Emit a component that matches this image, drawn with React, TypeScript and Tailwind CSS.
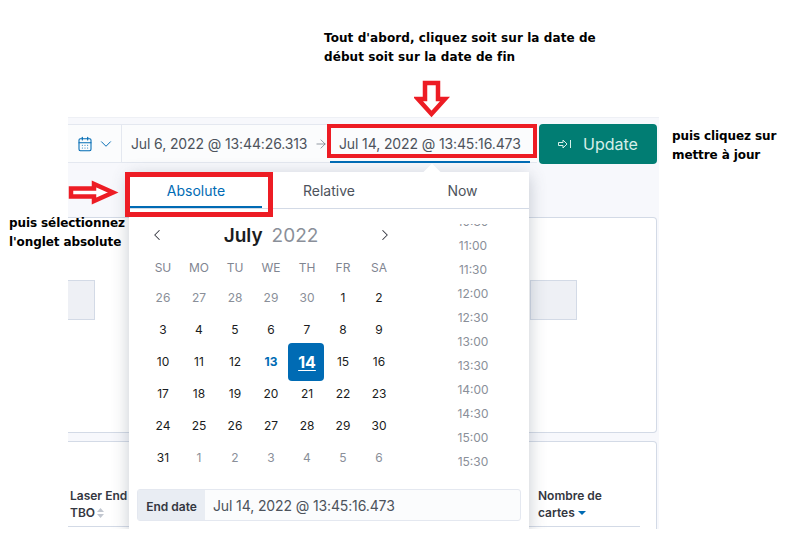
import React from "react";
import { CalendarDays, ChevronDown, ChevronLeft, ChevronRight, ArrowRight } from "lucide-react";

const weekDays = ["SU", "MO", "TU", "WE", "TH", "FR", "SA"];

const days = [
  { n: 26, muted: true }, { n: 27, muted: true }, { n: 28, muted: true }, { n: 29, muted: true }, { n: 30, muted: true }, { n: 1 }, { n: 2 },
  { n: 3 }, { n: 4 }, { n: 5 }, { n: 6 }, { n: 7 }, { n: 8 }, { n: 9 },
  { n: 10 }, { n: 11 }, { n: 12 }, { n: 13, today: true }, { n: 14, selected: true }, { n: 15 }, { n: 16 },
  { n: 17 }, { n: 18 }, { n: 19 }, { n: 20 }, { n: 21 }, { n: 22 }, { n: 23 },
  { n: 24 }, { n: 25 }, { n: 26 }, { n: 27 }, { n: 28 }, { n: 29 }, { n: 30 },
  { n: 31 }, { n: 1, muted: true }, { n: 2, muted: true }, { n: 3, muted: true }, { n: 4, muted: true }, { n: 5, muted: true }, { n: 6, muted: true },
];

const times = ["10:30", "11:00", "11:30", "12:00", "12:30", "13:00", "13:30", "14:00", "14:30", "15:00", "15:30"];

function DayCell({ d }: { d: { n: number; muted?: boolean; today?: boolean; selected?: boolean } }) {
  if (d.selected) {
    return (
      <div className="flex h-8 items-center justify-center">
        <span className="flex h-[38px] w-[38px] -translate-x-px items-center justify-center rounded-[4px] bg-[#006bb4] pl-[2px] text-[16px] font-bold text-white underline underline-offset-2">
          {d.n}
        </span>
      </div>
    );
  }
  let color = "text-[#1a1c21]";
  if (d.muted) color = "text-[#8a8f99]";
  if (d.today) color = "font-bold text-[#006bb4]";
  return <div className={`flex h-8 items-center justify-center text-[12px] ${color}`}>{d.n}</div>;
}

export default function App() {
  return (
    <div className="relative h-[537px] w-[796px] overflow-hidden bg-white font-['Inter',sans-serif]">
      <div className="ml-[68px] pt-[117px]">
        <div className="relative h-[412px] w-[591px] overflow-hidden border-t border-[#eef0f5] bg-[#f7f8fc]">
          {/* top bar */}
          <div className="flex items-start pt-[6px]">
            <div className="flex h-[39px] w-[469px] items-center border-y border-[#e4e8f0] bg-[#fbfcfd]">
              <div className="flex h-full w-[54px] items-center gap-[4px] border-r border-[#e4e8f0] pl-[9px] text-[#006bb4]">
                <CalendarDays size={16} strokeWidth={1.6} />
                <ChevronDown size={18} strokeWidth={1.3} />
              </div>
              <span className="ml-[9px] whitespace-nowrap text-[14px] tracking-[-0.12px] text-[#4d535c]">Jul 6, 2022 @ 13:44:26.313</span>
              <ArrowRight size={14} strokeWidth={1.2} className="ml-[7px] text-[#69707d]" />
            </div>
            <div className="ml-[2px] flex h-[40px] w-[118px] items-center justify-center gap-[11px] rounded-[4px] bg-[#017d73] text-[16px] text-[#d6efe9]">
              <svg width="14" height="10" viewBox="0 0 14 10" fill="none" stroke="currentColor" strokeWidth="1">
                <path d="M0.5 3.5H5V1L9 5L5 9V6.5H0.5Z" />
                <path d="M12.5 1V9" />
              </svg>
              <span>Update</span>
            </div>
          </div>

          {/* panels */}
          <div className="mt-[53px] flex w-[589px] flex-col gap-2">
            <div className="h-[216px] rounded-[4px] rounded-l-none border border-l-0 border-[#d3dae6] bg-white pt-[62px]">
              <div className="flex justify-between pr-[79px]">
                <div className="h-10 w-[27px] border border-l-0 border-[#d3dae6] bg-[#eef0f5]" />
                <div className="h-10 w-[47px] border border-[#d3dae6] bg-[#eef0f5]" />
              </div>
            </div>
            <div className="h-[120px] rounded-[4px] rounded-l-none border border-l-0 border-[#d3dae6] bg-white pt-[45px] text-[12px] font-semibold leading-[17px] text-[#343741]">
              <div className="flex w-[572px] border-b border-[#d3dae6] pb-[5px]">
                <div className="ml-[2px] w-[60px]">
                  <p>Laser End</p>
                  <p className="flex items-center gap-[2px]">
                    TBO
                    <svg width="7" height="10" viewBox="0 0 7 10" fill="#c2c7d0"><path d="M3.5 0L7 4H0Z" /><path d="M3.5 10L0 6H7Z" /></svg>
                  </p>
                </div>
                <div className="ml-[408px] w-[90px]">
                  <p>Nombre de</p>
                  <p className="flex items-center gap-[3px]">
                    cartes
                    <svg width="8" height="4" viewBox="0 0 8 4" fill="#006bb4"><path d="M0 0H8L4 4Z" /></svg>
                  </p>
                </div>
              </div>
            </div>
          </div>

          {/* popover */}
          <div className="absolute left-[61px] top-[54px] w-[400px] bg-white shadow-[0_4px_16px_rgba(65,78,101,0.3)]">
            <div className="absolute left-[297px] top-[-6px] h-3 w-3 rotate-45 bg-white" />
            <div className="relative flex h-[37px] items-stretch border-b border-[#d3dae6] text-[14px] text-[#4d535c]">
              <div className="ml-px flex w-[132px] items-center justify-center border-b-2 border-[#006bb4] pt-[3px] text-[#006bb4]">Absolute</div>
              <div className="flex w-[134px] items-center justify-center pt-px">Relative</div>
              <div className="flex w-[133px] items-center justify-center pt-px">Now</div>
            </div>
            <div className="flex">
              <div className="w-[291px] pl-4 pt-[11px]">
                <div className="flex h-8 w-[252px] items-center justify-between px-[3px] text-[#343741]">
                  <ChevronLeft size={18} strokeWidth={1.4} className="-translate-y-px" />
                  <div className="flex items-baseline gap-[9px]">
                    <span className="text-[19px] font-semibold text-[#1a1c21]">July</span>
                    <span className="text-[19px] text-[#8a8f99]">2022</span>
                  </div>
                  <ChevronRight size={18} strokeWidth={1.4} className="-translate-y-px" />
                </div>
                <div className="mt-1 grid w-[252px] grid-cols-7 pb-[2px] text-center text-[12px] leading-6 text-[#7f8591]">
                  {weekDays.map((w) => (
                    <span key={w}>{w}</span>
                  ))}
                </div>
                <div className="grid w-[252px] grid-cols-7">
                  {days.map((d, i) => (
                    <DayCell key={i} d={d} />
                  ))}
                </div>
              </div>
              <div className="mt-[15px] h-[251px] w-[106px] overflow-hidden text-center text-[12px] leading-6 text-[#8a8f99]">
                <div className="-mt-[14px]">
                  {times.map((t) => (
                    <div key={t}>{t}</div>
                  ))}
                </div>
              </div>
            </div>
            <div className="mx-2 mb-3 mt-[14px] flex h-8 items-stretch rounded-[3px] border border-[#e4e8f0] bg-[#fbfcfd] text-[14px]">
              <div className="flex w-[67px] items-center justify-center bg-[#e9edf3] pt-[3px] text-[12px] font-semibold text-[#343741]">End date</div>
              <div className="flex items-center pl-2 tracking-[-0.12px] text-[#4d535c]">Jul 14, 2022 @ 13:45:16.473</div>
            </div>
          </div>

          {/* end date field and its active underline */}
          <div className="absolute left-[262px] top-[43px] h-[2px] w-[200px] bg-[#006bb4]" />
          <span className="absolute left-[271px] top-[15px] whitespace-nowrap text-[14px] tracking-[-0.12px] text-[#4d535c]">Jul 14, 2022 @ 13:45:16.473</span>
        </div>
      </div>

      {/* annotations */}
      <div className="absolute left-[324px] top-[29px] font-['DejaVu_Sans',sans-serif] text-[12px] font-bold leading-[19px] tracking-[0.08px] text-black">
        <p className="whitespace-nowrap">Tout d'abord, cliquez soit sur la date de</p>
        <p className="whitespace-nowrap">début soit sur la date de fin</p>
      </div>
      <div className="absolute left-[672px] top-[127px] font-['DejaVu_Sans',sans-serif] text-[12px] font-bold leading-[19px] tracking-[-0.1px] text-black">
        <p>puis cliquez sur</p>
        <p>mettre à jour</p>
      </div>
      <div className="absolute left-[9px] top-[214px] font-['DejaVu_Sans',sans-serif] text-[12px] font-bold leading-[19px] tracking-[-0.1px] text-black">
        <p>puis sélectionnez</p>
        <p>l'onglet absolute</p>
      </div>
      <div className="absolute left-[327px] top-[124px] h-[34px] w-[210px] border-[4px] border-[#ed1c24]" />
      <div className="absolute left-[125px] top-[172px] h-[45px] w-[148px] border-[5px] border-[#ed1c24]" />
      <svg className="absolute left-[414px] top-[79px]" width="36" height="41" viewBox="0 0 36 41">
        <path d="M11 4H24V20H31L17.5 35L4 20H11Z" fill="white" stroke="#ed1c24" strokeWidth="4.5" />
      </svg>
      <svg className="absolute left-[67px] top-[180px]" width="54" height="25" viewBox="0 0 54 25">
        <path d="M4 8.5H27V4L46 12.5L27 21V16.5H4Z" fill="white" stroke="#ed1c24" strokeWidth="4.5" />
      </svg>
    </div>
  );
}
